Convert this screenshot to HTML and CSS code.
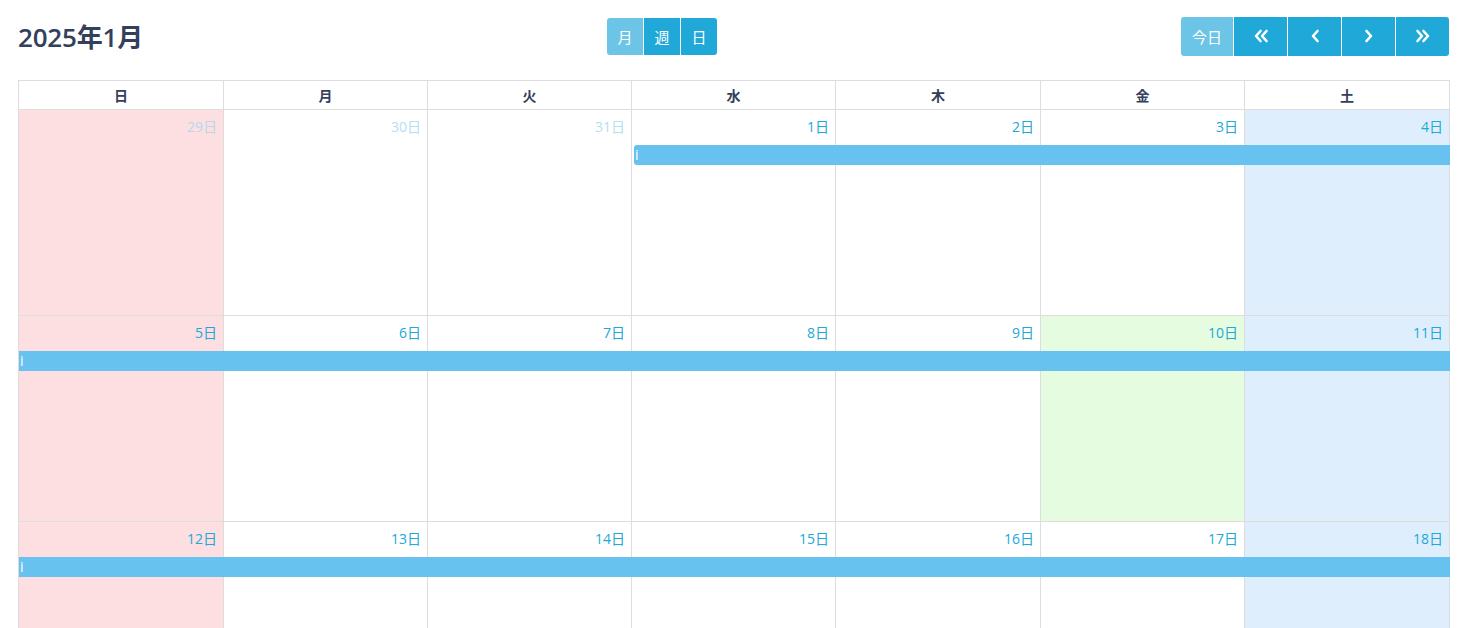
FILE: index.html
```html
<!DOCTYPE html>
<html lang="ja">
<head>
<meta charset="utf-8">
<title>Calendar</title>
<link rel="stylesheet" href="styles.css">
</head>
<body>
<div class="cal">
  <div class="toolbar">
    <h2 class="title">2025年1月</h2>
    <div class="group small">
      <button class="btn light">月</button>
      <button class="btn">週</button>
      <button class="btn">日</button>
    </div>
    <div class="group big">
      <button class="btn light today">今日</button>
      <button class="btn nav"><svg width="16" height="14" viewBox="0 0 16 14"><polyline points="7.5,2 3,7 7.5,12" /><polyline points="13.5,2 9,7 13.5,12" /></svg></button>
      <button class="btn nav"><svg width="16" height="14" viewBox="0 0 16 14"><polyline points="10.5,2 6,7 10.5,12" /></svg></button>
      <button class="btn nav"><svg width="16" height="14" viewBox="0 0 16 14"><polyline points="5.5,2 10,7 5.5,12" /></svg></button>
      <button class="btn nav"><svg width="16" height="14" viewBox="0 0 16 14"><polyline points="2.5,2 7,7 2.5,12" /><polyline points="8.5,2 13,7 8.5,12" /></svg></button>
    </div>
  </div>

  <div class="grid">
    <div class="head">
      <div class="hcell">日</div><div class="hcell">月</div><div class="hcell">火</div><div class="hcell">水</div><div class="hcell">木</div><div class="hcell">金</div><div class="hcell">土</div>
    </div>

    <div class="week">
      <div class="day sun other"><span class="num">29日</span></div>
      <div class="day other"><span class="num">30日</span></div>
      <div class="day other"><span class="num">31日</span></div>
      <div class="day"><span class="num">1日</span></div>
      <div class="day"><span class="num">2日</span></div>
      <div class="day"><span class="num">3日</span></div>
      <div class="day sat"><span class="num">4日</span></div>
      <div class="event start" style="grid-column: 4 / 8;">i</div>
    </div>

    <div class="week">
      <div class="day sun"><span class="num">5日</span></div>
      <div class="day"><span class="num">6日</span></div>
      <div class="day"><span class="num">7日</span></div>
      <div class="day"><span class="num">8日</span></div>
      <div class="day"><span class="num">9日</span></div>
      <div class="day today-cell"><span class="num">10日</span></div>
      <div class="day sat"><span class="num">11日</span></div>
      <div class="event" style="grid-column: 1 / 8;">i</div>
    </div>

    <div class="week">
      <div class="day sun"><span class="num">12日</span></div>
      <div class="day"><span class="num">13日</span></div>
      <div class="day"><span class="num">14日</span></div>
      <div class="day"><span class="num">15日</span></div>
      <div class="day"><span class="num">16日</span></div>
      <div class="day"><span class="num">17日</span></div>
      <div class="day sat"><span class="num">18日</span></div>
      <div class="event" style="grid-column: 1 / 8;">i</div>
    </div>
  </div>
</div>
</body>
</html>
```

FILE: styles.css
```css
html, body {
  margin: 0;
  padding: 0;
  background: #fff;
  font-family: "Open Sans", "Noto Sans CJK JP", sans-serif;
  color: #33405c;
  overflow: hidden;
}

.cal {
  padding: 17px 18px 0 18px;
}

.toolbar {
  display: flex;
  justify-content: space-between;
  align-items: center;
  height: 38px;
  margin-bottom: 25px;
}

.title {
  margin: 0;
  font-size: 26px;
  font-weight: 600;
  color: #33405c;
  letter-spacing: -0.2px;
}

.group {
  display: flex;
  gap: 1px;
}

.btn {
  border: none;
  margin: 0;
  padding: 0;
  background: #20a8d8;
  color: #fff;
  font-family: "Open Sans", "Noto Sans CJK JP", sans-serif;
  font-size: 15px;
  display: flex;
  align-items: center;
  justify-content: center;
}

.small .btn {
  width: 36px;
  height: 37px;
}

.big .btn {
  width: 53px;
  height: 39px;
}

.big .btn.today {
  width: 52px;
}

.btn.light {
  background: #6cc4e7;
}

.group .btn:first-child {
  border-radius: 3px 0 0 3px;
}

.group .btn:last-child {
  border-radius: 0 3px 3px 0;
}

.nav svg polyline {
  fill: none;
  stroke: #fff;
  stroke-width: 2.6;
  stroke-linecap: round;
  stroke-linejoin: round;
}

.grid {
  border-left: 1px solid #ddd;
  border-top: 1px solid #ddd;
  width: 1431px;
}

.head,
.week {
  display: grid;
  grid-template-columns: 205px 204px 204px 204px 205px 204px 205px;
}

.hcell {
  height: 28px;
  border-right: 1px solid #ddd;
  border-bottom: 1px solid #ddd;
  display: flex;
  align-items: center;
  justify-content: center;
  font-size: 14px;
  font-weight: 700;
  color: #33405c;
}

.week {
  grid-template-rows: 35px 20px 151px;
}

.day {
  grid-row: 1 / 4;
  border-right: 1px solid #ddd;
  border-bottom: 1px solid #ddd;
  display: flex;
  justify-content: flex-end;
  align-items: flex-start;
}

.week .day:nth-child(1) { grid-column: 1; }
.week .day:nth-child(2) { grid-column: 2; }
.week .day:nth-child(3) { grid-column: 3; }
.week .day:nth-child(4) { grid-column: 4; }
.week .day:nth-child(5) { grid-column: 5; }
.week .day:nth-child(6) { grid-column: 6; }
.week .day:nth-child(7) { grid-column: 7; }

.day.sun { background: #fddfe1; }
.day.sat { background: #deeefd; }
.day.today-cell { background: #e6fce0; }

.num {
  font-size: 14px;
  color: #20a8d8;
  padding: 7px 6px 0 0;
  line-height: 20px;
}

.other .num {
  color: #b4e0f2;
}

.day.sun.other .num {
  color: #b6d8ea;
}

.event {
  grid-row: 2;
  background: #67c2ef;
  color: #fff;
  font-size: 14px;
  line-height: 20px;
  height: 20px;
  padding-left: 1px;
  z-index: 1;
}

.event.start {
  margin-left: 2px;
  border-radius: 3px 0 0 3px;
}
```
